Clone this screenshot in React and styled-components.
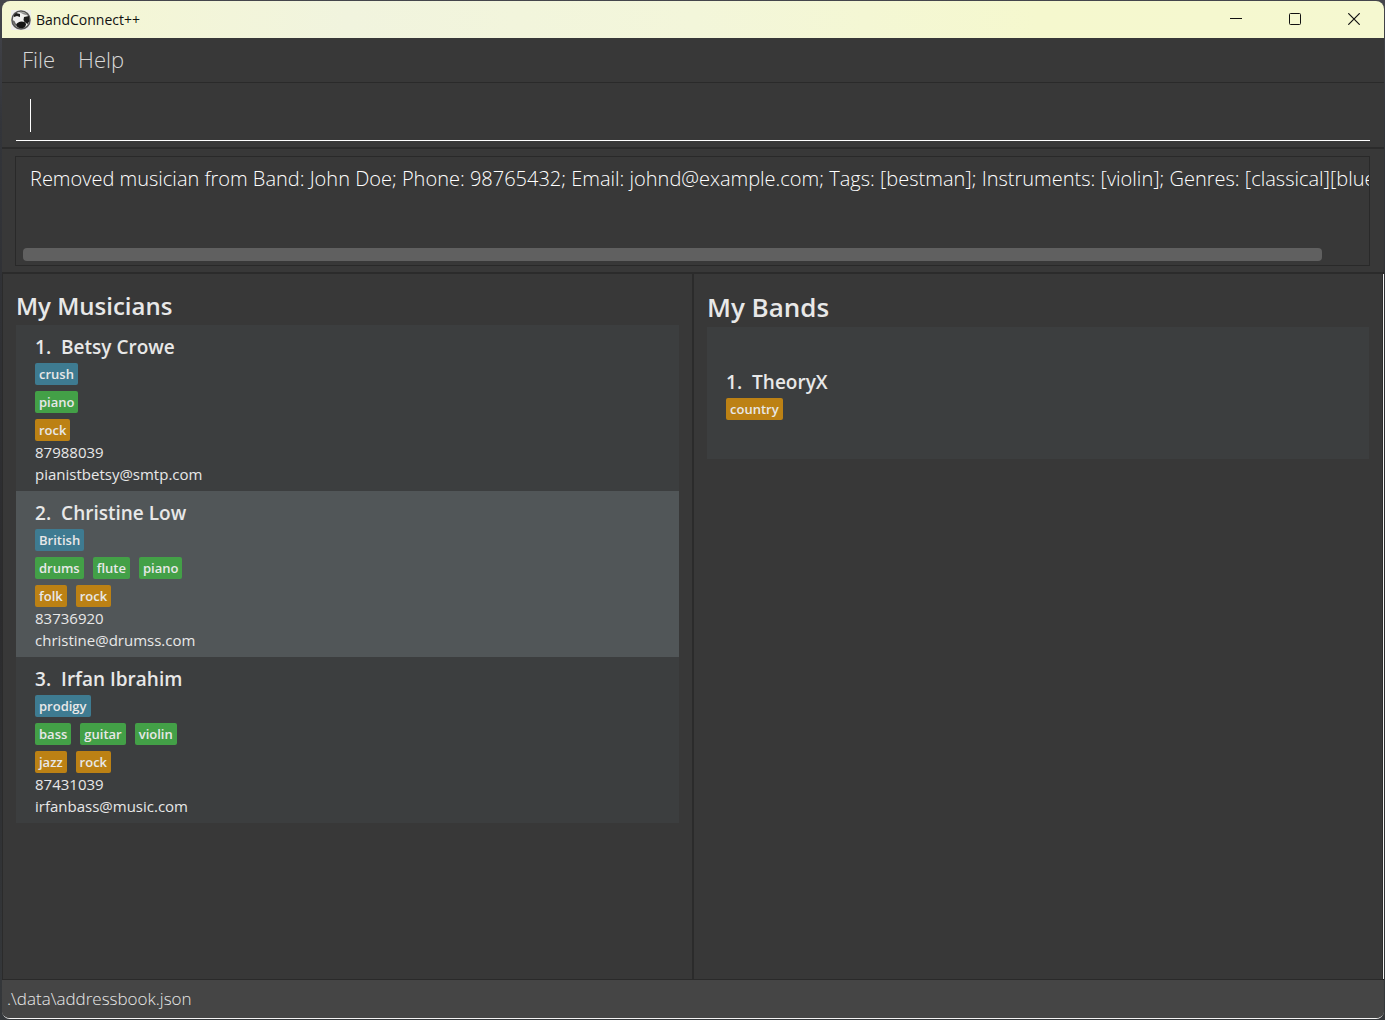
import React from "react";
import styled, { createGlobalStyle } from "styled-components";

const GlobalStyle = createGlobalStyle`
  *, *::before, *::after { box-sizing: border-box; }
  body {
    margin: 0;
    background: #2d2e31;
    font-family: "Open Sans", "Noto Sans", sans-serif;
    color: #e8e8e8;
  }
`;

const Desktop = styled.div`
  display: flex;
  min-height: 100vh;
  padding: 1px 1px 1px 2px;
  background: linear-gradient(#45464c, #33353a 12%, #2b2b2d 60%, #35383b);
`;

const Window = styled.div`
  flex: 1;
  min-width: 0;
  display: flex;
  flex-direction: column;
  overflow: hidden;
  border-radius: 8px;
  background: #383838;
  border-bottom: 1px solid #f4f4f4;
`;

const TitleBar = styled.header`
  display: flex;
  align-items: center;
  height: 37px;
  padding: 0 1px 0 9px;
  background: linear-gradient(90deg, #f5f7d2, #f1f4de 25%, #f3f6da 50%, #f5f8ce 75%, #f5f8d0);
  color: #111;
`;

const AppTitle = styled.h1`
  flex: 1;
  margin: 0 0 0 5px;
  font-size: 14px;
  line-height: 20px;
  font-weight: 400;
`;

const WindowButtons = styled.div`
  display: flex;
  align-self: flex-start;
`;

const WindowButton = styled.button`
  display: grid;
  place-items: center;
  width: 59px;
  height: 36px;
  padding: 0;
  border: 0;
  background: none;
  color: #111;
`;

const MenuBar = styled.nav`
  display: flex;
  align-items: center;
  gap: 23px;
  height: 45px;
  padding: 0 20px 2px;
  border-bottom: 1px solid #2a2a2a;
`;

const MenuButton = styled.button`
  padding: 0;
  border: 0;
  background: none;
  font: 300 22px/30px "Open Sans", sans-serif;
  color: #d8d8d8;
`;

const CommandPane = styled.section`
  padding: 10px 14px 6px;
  border-bottom: 2px solid #2b2b2b;
`;

const CommandLine = styled.label`
  display: flex;
  align-items: flex-end;
  height: 48px;
  padding: 0 14px 8px;
  border-bottom: 1px solid #fff;
`;

const Caret = styled.span`
  width: 1px;
  height: 33px;
  background: #fff;
`;

const CommandInput = styled.input`
  flex: 1;
  min-width: 0;
  padding: 0;
  border: 0;
  outline: 0;
  background: none;
  caret-color: transparent;
  color: #fff;
  font: 300 22px/30px "Open Sans", sans-serif;
`;

const ResultPane = styled.section`
  padding: 7px 14px 6px 13px;
  border-bottom: 2px solid #2b2b2b;
`;

const ResultBox = styled.div`
  display: flex;
  flex-direction: column;
  justify-content: space-between;
  height: 110px;
  padding-bottom: 4px;
  border: 1px solid #292929;
`;

const ResultText = styled.textarea`
  height: 44px;
  padding: 7px 0 7px 14px;
  border: 0;
  outline: 0;
  resize: none;
  overflow: hidden;
  white-space: pre;
  background: none;
  color: #fff;
  font: 300 20px/30px "Open Sans", sans-serif;
`;

const ScrollTrack = styled.div`
  margin: 0 7px;
`;

const ScrollThumb = styled.div`
  width: 97%;
  height: 13px;
  border-radius: 4px;
  background: #606060;
`;

const Panels = styled.main`
  flex: 1;
  display: grid;
  grid-template-columns: 1fr 2px 1fr;
  border-left: 1px solid #2b2b2b;
  border-right: 1px solid #f0f0f0;
`;

const Divider = styled.div`
  background: #2b2b2b;
`;

const Panel = styled.section`
  padding: ${(p) => (p.$large ? "15px 13px 0" : "14px 13px 0")};
  border-right: ${(p) => (p.$large ? "1px solid #2b2b2b" : "0")};
`;

const PanelTitle = styled.h2`
  margin: 0 0 1px;
  font-size: ${(p) => (p.$large ? 26 : 24)}px;
  line-height: ${(p) => (p.$large ? 37 : 36)}px;
  font-weight: 600;
`;

const CardList = styled.ol`
  margin: 0;
  padding: 0;
  list-style: none;
`;

const Card = styled.li`
  padding: ${(p) => (p.$roomy ? "40px 19px 39px" : "7px 19px 6px")};
  background: ${(p) => (p.$selected ? "#515658" : "#3c3e3f")};
`;

const Name = styled.h3`
  display: flex;
  gap: 10px;
  margin: 0;
  font-size: 19px;
  line-height: 31px;
  font-weight: 600;
`;

const TagRows = styled.div`
  display: grid;
  gap: 6px;
`;

const TagRow = styled.div`
  display: flex;
  gap: 9px;
`;

const tagColors = { tag: "#3e7b91", instrument: "#43a047", genre: "#bc8114" };

const Tag = styled.span`
  padding: 0 4px;
  border-radius: 2px;
  font-size: 13px;
  line-height: 22px;
  font-weight: 600;
  background: ${(p) => tagColors[p.$kind]};
`;

const Detail = styled.p`
  margin: 0;
  font-size: 15px;
  line-height: 22px;
`;

const StatusBar = styled.footer`
  height: 39px;
  padding: 0 5px;
  border-top: 1px solid #2a2a2a;
  background: #454545;
  font-size: 17px;
  line-height: 37px;
  font-weight: 300;
`;

const musicians = [
  { name: "Betsy Crowe", tag: ["crush"], instrument: ["piano"], genre: ["rock"], phone: "87988039", email: "pianistbetsy@smtp.com" },
  { name: "Christine Low", tag: ["British"], instrument: ["drums", "flute", "piano"], genre: ["folk", "rock"], phone: "83736920", email: "christine@drumss.com", selected: true },
  { name: "Irfan Ibrahim", tag: ["prodigy"], instrument: ["bass", "guitar", "violin"], genre: ["jazz", "rock"], phone: "87431039", email: "irfanbass@music.com" },
];

const bands = [{ name: "TheoryX", genre: ["country"] }];

const result =
  "Removed musician from Band: John Doe; Phone: 98765432; Email: johnd@example.com; Tags: [bestman]; Instruments: [violin]; Genres: [classical][blues]";

function AppLogo() {
  return (
    <svg width="20" height="20" viewBox="0 0 20 20" aria-hidden="true">
      <rect width="20" height="20" fill="#eeeeec" />
      <circle cx="10" cy="10" r="9" fill="#efefef" stroke="#555" strokeWidth="1.6" />
      <path d="M3 5l2-2 4 1v3l-3-1-3 1zM13 7l5-1 .5 5-2 3-3-2-1-2z" fill="#1c1c1c" />
      <path d="M8 2l6 .5 3 3-4-1z" fill="#8a8a8a" />
      <path d="M1.500 10l2 1 2 4-1 1c-2-2-3-4-3-6z" fill="#666" />
      <path d="M5 15c1-4 9-5 10-1 0 5-8 6-10 1z" fill="#151515" />
    </svg>
  );
}

function Entry({ index, item, roomy }) {
  return (
    <Card $selected={item.selected} $roomy={roomy}>
      <Name>
        <span>{index}.</span>
        <span>{item.name}</span>
      </Name>
      <TagRows>
        {["tag", "instrument", "genre"].filter((kind) => item[kind]).map((kind) => (
          <TagRow key={kind}>
            {item[kind].map((label) => (
              <Tag key={label} $kind={kind}>{label}</Tag>
            ))}
          </TagRow>
        ))}
      </TagRows>
      {item.phone && <Detail>{item.phone}</Detail>}
      {item.email && <Detail>{item.email}</Detail>}
    </Card>
  );
}

export default function App() {
  return (
    <Desktop>
      <GlobalStyle />
      <Window>
        <TitleBar>
          <AppLogo />
          <AppTitle>BandConnect++</AppTitle>
          <WindowButtons>
            <WindowButton aria-label="Minimize">
              <svg width="12" height="12" viewBox="0 0 12 12"><path d="M0 5.5h12" stroke="currentColor" /></svg>
            </WindowButton>
            <WindowButton aria-label="Maximize">
              <svg width="12" height="12" viewBox="0 0 12 12"><rect x=".5" y=".5" width="11" height="11" rx="1" fill="none" stroke="currentColor" /></svg>
            </WindowButton>
            <WindowButton aria-label="Close">
              <svg width="12" height="12" viewBox="0 0 12 12"><path d="M.3.3l11.4 11.4M11.7.3L.3 11.7" stroke="currentColor" strokeWidth="1.2" /></svg>
            </WindowButton>
          </WindowButtons>
        </TitleBar>
        <MenuBar>
          <MenuButton>File</MenuButton>
          <MenuButton>Help</MenuButton>
        </MenuBar>
        <CommandPane>
          <CommandLine>
            <Caret />
            <CommandInput type="text" aria-label="Command" />
          </CommandLine>
        </CommandPane>
        <ResultPane>
          <ResultBox>
            <ResultText readOnly rows={1} wrap="off" aria-label="Result" value={result} />
            <ScrollTrack>
              <ScrollThumb />
            </ScrollTrack>
          </ResultBox>
        </ResultPane>
        <Panels>
          <Panel>
            <PanelTitle>My Musicians</PanelTitle>
            <CardList>
              {musicians.map((m, i) => <Entry key={m.name} index={i + 1} item={m} />)}
            </CardList>
          </Panel>
          <Divider />
          <Panel $large>
            <PanelTitle $large>My Bands</PanelTitle>
            <CardList>
              {bands.map((b, i) => <Entry key={b.name} index={i + 1} item={b} roomy />)}
            </CardList>
          </Panel>
        </Panels>
        <StatusBar>.\data\addressbook.json</StatusBar>
      </Window>
    </Desktop>
  );
}
